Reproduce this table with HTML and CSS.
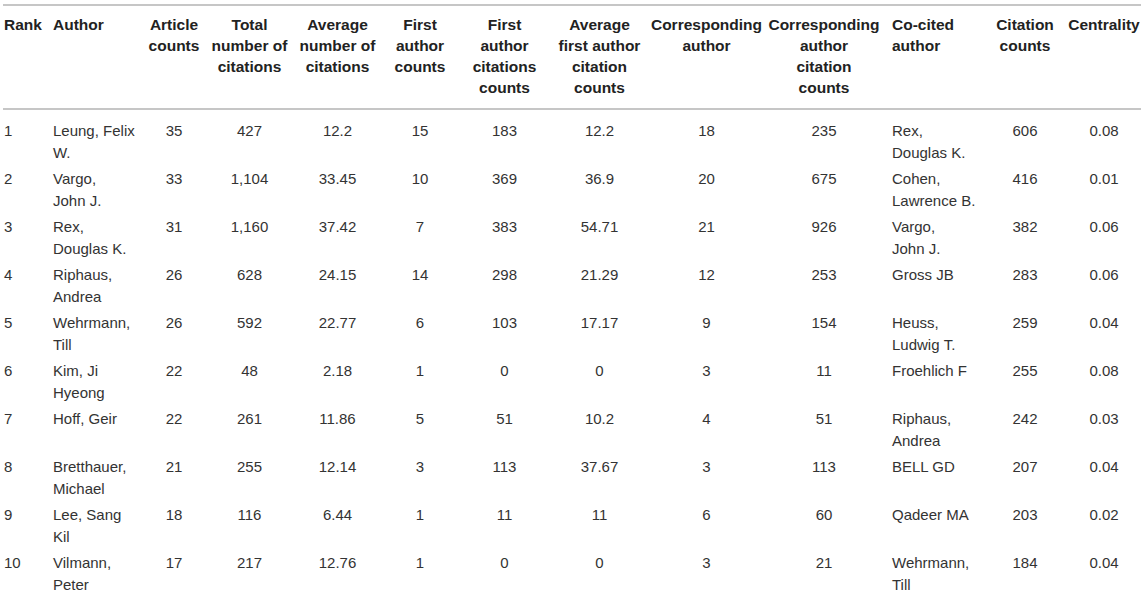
FILE: index.html
```html
<!DOCTYPE html>
<html lang="en">
<head>
  <meta charset="UTF-8" />
  <title>Top 10 authors</title>
  <link rel="stylesheet" href="styles.css">
</head>
<body>
  <table class="authors">
    <colgroup>
      <col class="c-rank">
      <col class="c-author">
      <col class="c-articles">
      <col class="c-total">
      <col class="c-average">
      <col class="c-first">
      <col class="c-first-cit">
      <col class="c-first-avg">
      <col class="c-corr">
      <col class="c-corr-cit">
      <col class="c-cocited">
      <col class="c-cit">
      <col class="c-central">
    </colgroup>
    <thead>
      <tr>
        <th class="left">Rank</th>
        <th class="left">Author</th>
        <th>Article<br>counts</th>
        <th>Total<br>number of<br>citations</th>
        <th>Average<br>number of<br>citations</th>
        <th>First<br>author<br>counts</th>
        <th>First<br>author<br>citations<br>counts</th>
        <th>Average<br>first author<br>citation<br>counts</th>
        <th>Corresponding<br>author</th>
        <th>Corresponding<br>author<br>citation<br>counts</th>
        <th class="left cocited">Co-cited<br>author</th>
        <th>Citation<br>counts</th>
        <th>Centrality</th>
      </tr>
    </thead>
    <tbody>
      <tr>
        <td class="left">1</td><td class="left">Leung, Felix W.</td><td>35</td><td>427</td><td>12.2</td><td>15</td><td>183</td><td>12.2</td><td>18</td><td>235</td><td class="left cocited">Rex, Douglas&nbsp;K.</td><td>606</td><td>0.08</td>
      </tr>
      <tr>
        <td class="left">2</td><td class="left">Vargo, John&nbsp;J.</td><td>33</td><td>1,104</td><td>33.45</td><td>10</td><td>369</td><td>36.9</td><td>20</td><td>675</td><td class="left cocited">Cohen, Lawrence&nbsp;B.</td><td>416</td><td>0.01</td>
      </tr>
      <tr>
        <td class="left">3</td><td class="left">Rex, Douglas&nbsp;K.</td><td>31</td><td>1,160</td><td>37.42</td><td>7</td><td>383</td><td>54.71</td><td>21</td><td>926</td><td class="left cocited">Vargo, John&nbsp;J.</td><td>382</td><td>0.06</td>
      </tr>
      <tr>
        <td class="left">4</td><td class="left">Riphaus, Andrea</td><td>26</td><td>628</td><td>24.15</td><td>14</td><td>298</td><td>21.29</td><td>12</td><td>253</td><td class="left cocited">Gross JB</td><td>283</td><td>0.06</td>
      </tr>
      <tr>
        <td class="left">5</td><td class="left">Wehrmann, Till</td><td>26</td><td>592</td><td>22.77</td><td>6</td><td>103</td><td>17.17</td><td>9</td><td>154</td><td class="left cocited">Heuss, Ludwig&nbsp;T.</td><td>259</td><td>0.04</td>
      </tr>
      <tr>
        <td class="left">6</td><td class="left">Kim, Ji Hyeong</td><td>22</td><td>48</td><td>2.18</td><td>1</td><td>0</td><td>0</td><td>3</td><td>11</td><td class="left cocited">Froehlich F</td><td>255</td><td>0.08</td>
      </tr>
      <tr>
        <td class="left">7</td><td class="left">Hoff, Geir</td><td>22</td><td>261</td><td>11.86</td><td>5</td><td>51</td><td>10.2</td><td>4</td><td>51</td><td class="left cocited">Riphaus, Andrea</td><td>242</td><td>0.03</td>
      </tr>
      <tr>
        <td class="left">8</td><td class="left">Bretthauer, Michael</td><td>21</td><td>255</td><td>12.14</td><td>3</td><td>113</td><td>37.67</td><td>3</td><td>113</td><td class="left cocited">BELL GD</td><td>207</td><td>0.04</td>
      </tr>
      <tr>
        <td class="left">9</td><td class="left">Lee, Sang Kil</td><td>18</td><td>116</td><td>6.44</td><td>1</td><td>11</td><td>11</td><td>6</td><td>60</td><td class="left cocited">Qadeer MA</td><td>203</td><td>0.02</td>
      </tr>
      <tr>
        <td class="left">10</td><td class="left">Vilmann, Peter</td><td>17</td><td>217</td><td>12.76</td><td>1</td><td>0</td><td>0</td><td>3</td><td>21</td><td class="left cocited">Wehrmann, Till</td><td>184</td><td>0.04</td>
      </tr>
    </tbody>
  </table>
</body>
</html>
```

FILE: styles.css
```css
body {
  margin: 0;
  background: #fff;
  font-family: "Liberation Sans", Arial, sans-serif;
  color: #333;
}
.authors {
  margin: 4px 0 0 3px;
  width: 1138px;
  table-layout: fixed;
  border-collapse: collapse;
}
.c-rank { width: 49px; }
.c-author { width: 88px; }
.c-articles { width: 68px; }
.c-total { width: 83px; }
.c-average { width: 93px; }
.c-first { width: 72px; }
.c-first-cit { width: 97px; }
.c-first-avg { width: 93px; }
.c-corr { width: 121px; }
.c-corr-cit { width: 114px; }
.c-cocited { width: 102px; }
.c-cit { width: 84px; }
.c-central { width: 74px; }
th, td {
  text-align: center;
  vertical-align: top;
  padding: 2px 1px;
}
th {
  font-size: 15.5px;
  line-height: 21px;
  font-weight: bold;
  color: #222;
  padding-top: 8px;
  padding-bottom: 10px;
  border-top: 2px solid #c6c6c6;
  border-bottom: 2px solid #c6c6c6;
}
td {
  font-size: 15px;
  line-height: 22px;
}
tbody tr:first-child td {
  padding-top: 10px;
}
.left {
  text-align: left;
}
.cocited {
  padding-left: 11px;
  padding-right: 4px;
}
```
